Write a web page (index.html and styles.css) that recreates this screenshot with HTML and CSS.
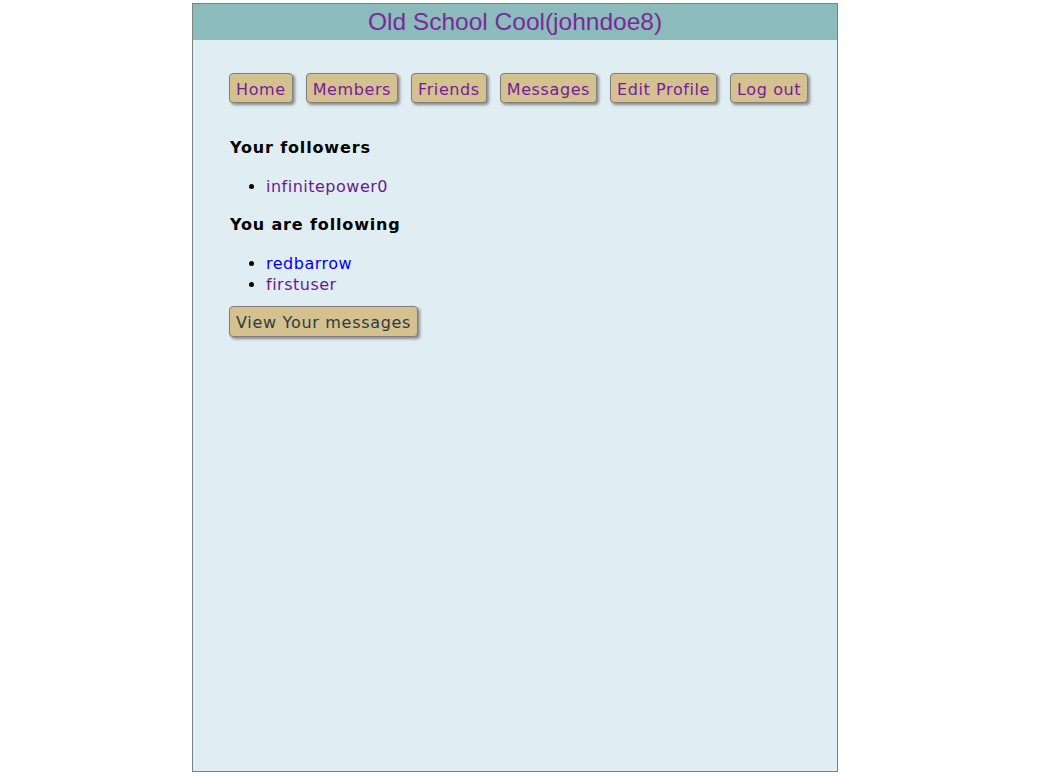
FILE: index.html
```html
<!DOCTYPE html>
<html>
<head>
<meta charset="utf-8">
<title>Old School Cool</title>
<link rel="stylesheet" href="styles.css">
</head>
<body>
<div class="wrapper">
  <header class="banner">Old School Cool(johndoe8)</header>
  <main class="content">
    <nav class="menu">
      <a class="btn" href="#">Home</a>
      <a class="btn" href="#">Members</a>
      <a class="btn" href="#">Friends</a>
      <a class="btn" href="#">Messages</a>
      <a class="btn" href="#">Edit Profile</a>
      <a class="btn" href="#">Log out</a>
    </nav>
    <h3 class="heading">Your followers</h3>
    <ul class="list">
      <li><a class="visited" href="#">infinitepower0</a></li>
    </ul>
    <h3 class="heading">You are following</h3>
    <ul class="list list-last">
      <li><a class="link" href="#">redbarrow</a></li>
      <li><a class="visited" href="#">firstuser</a></li>
    </ul>
    <a class="btn btn-dark" href="#">View Your messages</a>
  </main>
</div>
</body>
</html>
```
FILE: styles.css
```css
html, body {
  margin: 0;
  padding: 0;
  background: #ffffff;
}
body {
  font-family: "DejaVu Sans", Verdana, sans-serif;
  font-size: 16px;
  letter-spacing: 0.5px;
  color: #000;
}
.wrapper {
  width: 644px;
  height: 767px;
  margin: 3px 0 0 192px;
  border: 1px solid #808080;
  background: #e0edf3;
  box-sizing: content-box;
}
.banner {
  background: #8bbbbb;
  color: #7a2a9a;
  font-family: "Liberation Sans", Arial, sans-serif;
  font-size: 24.5px;
  letter-spacing: 0;
  text-align: center;
  height: 36px;
  line-height: 36px;
}
.content {
  padding: 33px 36px 0 36px;
}
.menu {
  display: flex;
  gap: 13px;
  margin-bottom: 35px;
}
.btn {
  display: inline-block;
  flex-shrink: 0;
  white-space: nowrap;
  background: #d4c18f;
  color: #751c9c;
  text-decoration: none;
  border: 1px solid #7f7f7f;
  border-radius: 4px;
  box-shadow: 2px 2px 3px #8a8a8a;
  padding: 0 6px;
  height: 28px;
  line-height: 32px;
  font-size: 16px;
  letter-spacing: 0.6px;
}
.btn-dark {
  color: #2e3b3b;
  height: 29px;
  letter-spacing: 0.7px;
}
.heading {
  font-size: 16px;
  font-weight: bold;
  letter-spacing: 0.85px;
  margin: 0 0 18px 1px;
  line-height: 20px;
}
.list {
  margin: 0 0 18px 0;
  padding-left: 37px;
  line-height: 21px;
}
.list-last {
  margin-bottom: 11px;
}
.visited {
  color: #6b1a8b;
  text-decoration: none;
}
.link {
  color: #0000ee;
  text-decoration: none;
}
```
